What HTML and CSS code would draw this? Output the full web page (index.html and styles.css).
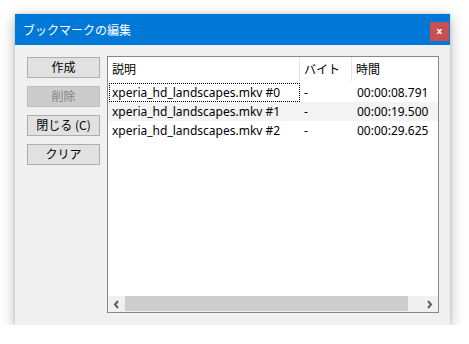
FILE: index.html
```html
<!DOCTYPE html>
<html lang="ja">
<head>
<meta charset="utf-8">
<link rel="stylesheet" href="styles.css">
</head>
<body>
<div class="window">
  <div class="titlebar">
    <span class="title">ブックマークの編集</span>
    <span class="close">x</span>
  </div>
  <div class="content">
    <div class="buttons">
      <div class="btn">作成</div>
      <div class="btn disabled">削除</div>
      <div class="btn">閉じる (C)</div>
      <div class="btn">クリア</div>
    </div>
    <div class="list">
      <div class="header">
        <div class="hcell c1">説明</div>
        <div class="hcell c2">バイト</div>
        <div class="hcell c3">時間</div>
      </div>
      <div class="row">
        <div class="cell c1 focus">xperia_hd_landscapes.mkv #0</div>
        <div class="cell c2">-</div>
        <div class="cell c3">00:00:08.791</div>
      </div>
      <div class="row hover">
        <div class="cell c1">xperia_hd_landscapes.mkv #1</div>
        <div class="cell c2">-</div>
        <div class="cell c3">00:00:19.500</div>
      </div>
      <div class="row">
        <div class="cell c1">xperia_hd_landscapes.mkv #2</div>
        <div class="cell c2">-</div>
        <div class="cell c3">00:00:29.625</div>
      </div>
      <div class="spacer"></div>
      <div class="hscroll">
        <div class="arrow">
          <svg width="7" height="9" viewBox="0 0 7 9"><path d="M5 1 L2 4.5 L5 8" fill="none" stroke="#606060" stroke-width="2"/></svg>
        </div>
        <div class="thumb"></div>
        <div class="track"></div>
        <div class="arrow">
          <svg width="7" height="9" viewBox="0 0 7 9"><path d="M2 1 L5 4.5 L2 8" fill="none" stroke="#606060" stroke-width="2"/></svg>
        </div>
      </div>
    </div>
  </div>
</div>
</body>
</html>
```
FILE: styles.css
```css
html, body {
  margin: 0;
  padding: 0;
  background: #ffffff;
}
body {
  font-family: "Segoe UI", "Noto Sans", "Noto Sans CJK JP", sans-serif;
  font-size: 12px;
  color: #000;
  padding: 14px 0 0 15px;
}
.window {
  width: 435px;
  height: 311px;
  background: #f0f0f0;
  box-shadow: 0 4px 14px rgba(0, 0, 0, 0.28), 0 0 3px rgba(0, 0, 0, 0.15);
  display: flex;
  flex-direction: column;
}
.titlebar {
  height: 31px;
  background: #0078d7;
  display: flex;
  align-items: flex-start;
  justify-content: space-between;
}
.title {
  font-family: "Noto Sans CJK JP", sans-serif;
  color: #ffffff;
  font-size: 12px;
  line-height: 16px;
  margin: 8px 0 0 8px;
}
.close {
  width: 19px;
  height: 19px;
  margin: 8px 1px 0 0;
  background: #c75050;
  color: #fff;
  font-family: "DejaVu Sans", sans-serif;
  font-weight: bold;
  font-size: 9px;
  line-height: 18px;
  text-align: center;
}
.content {
  flex: 1;
  display: flex;
  padding: 11px 11px 12px 12px;
  gap: 7px;
}
.buttons {
  display: flex;
  flex-direction: column;
  gap: 8px;
  padding-top: 1px;
}
.btn {
  box-sizing: border-box;
  width: 73px;
  height: 21px;
  background: #e1e1e1;
  border: 1px solid #adadad;
  font-family: "Noto Sans CJK JP", sans-serif;
  font-size: 12px;
  line-height: 18px;
  text-align: center;
}
.btn.disabled {
  background: #cccccc;
  border-color: #bfbfbf;
  color: #838383;
}
.list {
  flex: 1;
  box-sizing: border-box;
  border: 1px solid #828790;
  background: #fff;
  display: flex;
  flex-direction: column;
}
.header, .row {
  display: flex;
}
.header {
  height: 24px;
}
.hcell {
  box-sizing: border-box;
  font-family: "Noto Sans CJK JP", sans-serif;
  font-size: 12px;
  line-height: 24px;
  padding-left: 4px;
  border-right: 1px solid #e5e5e5;
}
.c1 { width: 192px; }
.c2 { width: 52px; }
.c3 { flex: 1; }
.hcell.c3 { border-right: none; }
.row {
  height: 19px;
}
.header + .row {
  margin-top: 2px;
}
.row.hover {
  background: #f3f3f3;
}
.cell {
  box-sizing: border-box;
  line-height: 19px;
  padding-left: 4px;
  white-space: nowrap;
  overflow: hidden;
}
.cell.c3 { padding-left: 5px; }
.cell.focus {
  border: 1px dotted #000;
  line-height: 17px;
  padding-left: 2px;
  margin-left: 1px;
  width: 191px;
}
.spacer { flex: 1; }
.hscroll {
  height: 16px;
  display: flex;
  background: #f0f0f0;
}
.arrow {
  width: 17px;
  display: flex;
  align-items: center;
  justify-content: center;
}
.thumb {
  width: 283px;
  background: #cdcdcd;
  margin: 0 0 1px 0;
}
.track { flex: 1; }
```
